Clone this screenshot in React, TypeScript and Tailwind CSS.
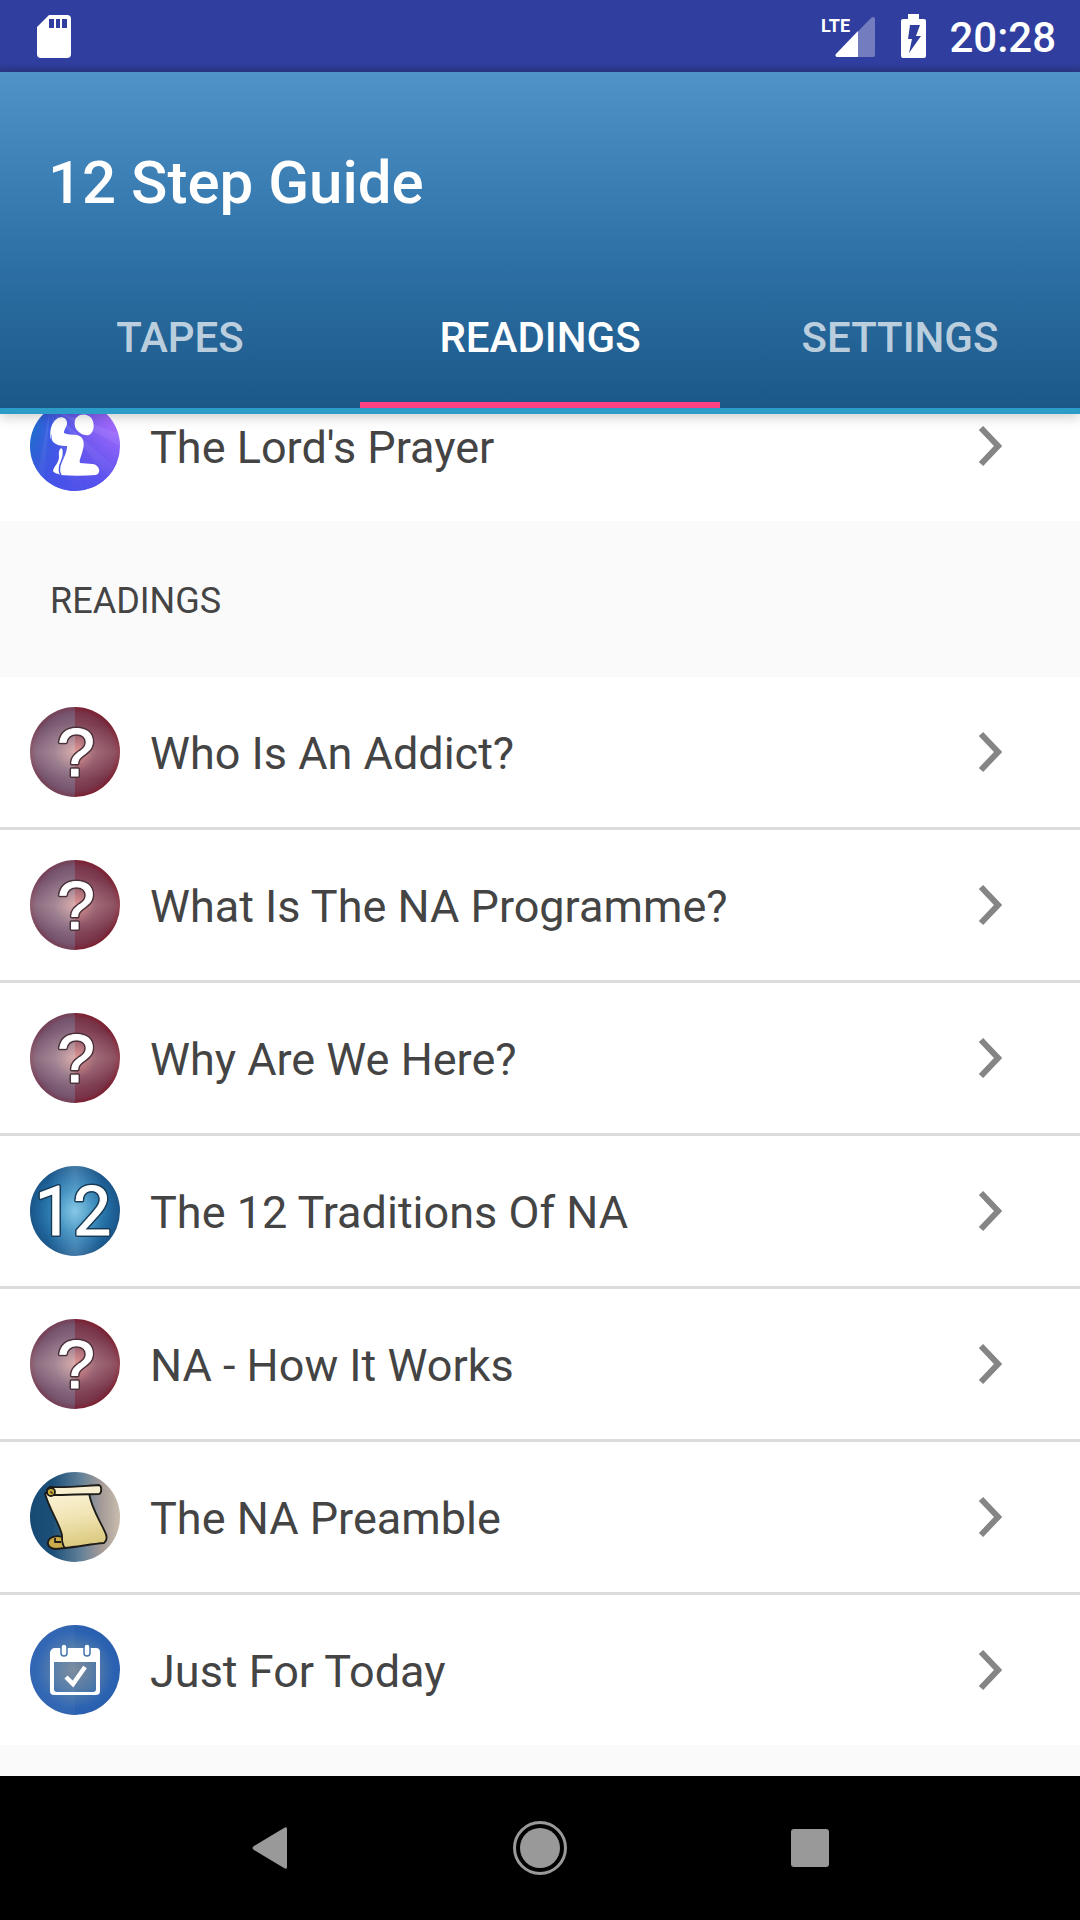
import { useState, type ReactNode } from 'react';
import { clsx } from 'clsx';

type IconName = 'prayer' | 'question' | 'twelve' | 'scroll' | 'calendar';

interface Reading {
  title: string;
  icon: IconName;
}

const TABS = ['TAPES', 'READINGS', 'SETTINGS'];

const PRAYERS: Reading[] = [{ title: "The Lord's Prayer", icon: 'prayer' }];

const READINGS: Reading[] = [
  { title: 'Who Is An Addict?', icon: 'question' },
  { title: 'What Is The NA Programme?', icon: 'question' },
  { title: 'Why Are We Here?', icon: 'question' },
  { title: 'The 12 Traditions Of NA', icon: 'twelve' },
  { title: 'NA - How It Works', icon: 'question' },
  { title: 'The NA Preamble', icon: 'scroll' },
  { title: 'Just For Today', icon: 'calendar' },
];

// Gradients shared by all row icons, rendered once
function IconDefs() {
  return (
    <svg className="absolute h-0 w-0" aria-hidden="true">
      <defs>
        <linearGradient id="prayer-bg" x1="0" y1="0.4" x2="1" y2="0.3">
          <stop offset="0" stopColor="#1a6fc8" />
          <stop offset="0.25" stopColor="#3d5ce6" />
          <stop offset="0.6" stopColor="#7a5cf2" />
          <stop offset="1" stopColor="#a86cff" />
        </linearGradient>
        <linearGradient id="prayer-shade" x1="0" y1="0" x2="0" y2="1">
          <stop offset="0.3" stopColor="#4a4ae8" stopOpacity="0" />
          <stop offset="1" stopColor="#4a50ea" stopOpacity="0.9" />
        </linearGradient>
        <radialGradient id="question-left" gradientUnits="userSpaceOnUse" cx="45" cy="45" r="46">
          <stop offset="0" stopColor="#d3a3a3" />
          <stop offset="0.45" stopColor="#8f7286" />
          <stop offset="0.85" stopColor="#76546e" />
          <stop offset="1" stopColor="#743a50" />
        </radialGradient>
        <radialGradient id="question-right" gradientUnits="userSpaceOnUse" cx="45" cy="45" r="46">
          <stop offset="0" stopColor="#dc8a88" />
          <stop offset="0.45" stopColor="#8b5063" />
          <stop offset="0.85" stopColor="#78354a" />
          <stop offset="1" stopColor="#7c1c2c" />
        </radialGradient>
        {/* Soft cross of light through the middle of the badge */}
        <linearGradient id="glint-y" x1="0" y1="0" x2="0" y2="1">
          <stop offset="0.2" stopColor="#ffe4dc" stopOpacity="0" />
          <stop offset="0.5" stopColor="#ffe4dc" stopOpacity="0.18" />
          <stop offset="0.8" stopColor="#ffe4dc" stopOpacity="0" />
        </linearGradient>
        <linearGradient id="glint-x">
          <stop offset="0.2" stopColor="#bfe8ff" stopOpacity="0" />
          <stop offset="0.5" stopColor="#bfe8ff" stopOpacity="0.24" />
          <stop offset="0.8" stopColor="#bfe8ff" stopOpacity="0" />
        </linearGradient>
        <radialGradient id="twelve-bg">
          <stop offset="0" stopColor="#72bcdd" />
          <stop offset="0.45" stopColor="#3587b9" />
          <stop offset="0.8" stopColor="#1f669d" />
          <stop offset="1" stopColor="#1b5588" />
        </radialGradient>
        <linearGradient id="scroll-bg">
          <stop offset="0" stopColor="#164a74" />
          <stop offset="0.25" stopColor="#1c4f78" />
          <stop offset="0.55" stopColor="#5f7f98" />
          <stop offset="0.8" stopColor="#a69c98" />
          <stop offset="1" stopColor="#c9bdae" />
        </linearGradient>
        <linearGradient id="scroll-paper" x1="0" y1="0" x2="0.2" y2="1">
          <stop offset="0" stopColor="#fbf3d8" />
          <stop offset="0.5" stopColor="#f1e4b4" />
          <stop offset="1" stopColor="#dccb82" />
        </linearGradient>
        <radialGradient id="calendar-bg">
          <stop offset="0" stopColor="#7c8a9c" />
          <stop offset="0.5" stopColor="#4f79a8" />
          <stop offset="0.85" stopColor="#2b62b2" />
          <stop offset="1" stopColor="#2a5fae" />
        </radialGradient>
      </defs>
    </svg>
  );
}

function PrayerIcon() {
  return (
    <>
      <circle cx="45" cy="45" r="45" fill="url(#prayer-bg)" />
      <g fill="#fff" opacity="0.08">
        <path d="M20 8 88 32 90 45Z" />
        <path d="M20 8 84 66 78 75Z" />
        <path d="M20 8 54 89 44 90Z" />
        <path d="M20 8 14 78 8 70Z" />
      </g>
      <circle cx="45" cy="45" r="45" fill="url(#prayer-shade)" />
      <g fill="#fff">
        <path d="M47 16c4-4 12-3 15 2 3 6 2 13-3 16-5 1-10-2-13-6-2-4-2-9 1-12Z" />
        <path d="M28 17c4-2 9 0 9 5 0 4-3 6-3 10 5 3 12 0 17 4 4 4 3 10 1 16-1 4-3 7-2 10l12 1c7 0 10 9 4 11-12 1-24 1-36 0-2-4 1-9 2-13 2-5 5-9 5-16-6 0-13-1-15-6-1-3 0-4-1-6v6c-2-8 0-18 7-22Z" />
        <path d="M31 47c4 2 3 7 2 12-2 6-4 10-1 15-4-1-8-2-9-4 1-5 5-7 6-13 0-4-1-7 2-10Z" />
      </g>
      <path d="M33 47c2 7-1 12-3 17-1 4-1 7 1 10" fill="none" stroke="#4a58e8" strokeWidth="1.5" />
    </>
  );
}

interface BadgeTextProps {
  x: number;
  outline: string;
  className: string;
  children: string;
}

// White characters with a thin dark rim
function BadgeText({ x, outline, className, children }: BadgeTextProps) {
  return (
    <g textAnchor="middle" strokeLinejoin="round" className={className}>
      <text x={x} y="69" fill={outline} stroke={outline} strokeWidth="4" aria-hidden="true">
        {children}
      </text>
      <text x={x} y="69" fill="#fff" stroke="#fff" strokeWidth="1">
        {children}
      </text>
    </g>
  );
}

function QuestionIcon() {
  return (
    <>
      <path d="M45 0a45 45 0 0 0 0 90Z" fill="url(#question-left)" />
      <path d="M45 0a45 45 0 0 1 0 90Z" fill="url(#question-right)" />
      <circle cx="45" cy="45" r="45" fill="url(#glint-y)" />
      <BadgeText x={46} outline="#4a3038" className="font-['Liberation_Sans',sans-serif] text-[68px]">
        ?
      </BadgeText>
    </>
  );
}

function TwelveIcon() {
  return (
    <>
      <circle cx="45" cy="45" r="45" fill="url(#twelve-bg)" />
      <circle cx="45" cy="45" r="45" fill="url(#glint-x)" />
      <BadgeText x={43} outline="#173a56" className="font-[Roboto,sans-serif] text-[68px]">
        12
      </BadgeText>
    </>
  );
}

function ScrollIcon() {
  return (
    <>
      <circle cx="45" cy="45" r="45" fill="url(#scroll-bg)" />
      <g stroke="#1d1c18" strokeWidth="1.8" strokeLinejoin="round">
        <path
          d="M15 21c3 14 14 29 17 42 0 5-1 10 2 13 13-1 27-4 40-5 4-3 3-7 1-11C69 47 61 35 59 21Z"
          fill="url(#scroll-paper)"
        />
        <path d="M32 65c-6-2-13 0-14 5-1 4 3 7 8 7l9-1c-3-3-3-7-3-11Z" fill="#c9ab4c" />
        <path d="M25 66v4h6" fill="none" />
        <path d="M20 15c16 1 33-1 49-2 3 1 3 8 0 9-16 0-31 1-47 1-5 1-7-6-2-8Z" fill="#f8efd0" />
        <circle cx="21" cy="20" r="4" fill="#cfae3f" />
        <path d="M20 20h2v2" fill="none" strokeWidth="1" />
      </g>
    </>
  );
}

function CalendarIcon() {
  return (
    <>
      <circle cx="45" cy="45" r="45" fill="url(#calendar-bg)" />
      <path d="M45 0a45 45 0 0 0 0 90Z" fill="#fff" opacity="0.04" />
      <path
        fillRule="evenodd"
        fill="#fff"
        d="M25 23h41a4 4 0 0 1 4 4v39a4 4 0 0 1-4 4H24a4 4 0 0 1-4-4V28a5 5 0 0 1 5-5Zm-1 14v27a3 3 0 0 0 3 3h36a3 3 0 0 0 3-3V37Z"
      />
      <g fill="#fff" stroke="#4273b0" strokeWidth="1.5">
        <rect x="31" y="19" width="6" height="12" rx="3" />
        <rect x="54" y="19" width="6" height="12" rx="3" />
      </g>
      <path d="m36 52 7 7 12-17" fill="none" stroke="#fff" strokeWidth="4.5" />
    </>
  );
}

const ICONS: Record<IconName, ReactNode> = {
  prayer: <PrayerIcon />,
  question: <QuestionIcon />,
  twelve: <TwelveIcon />,
  scroll: <ScrollIcon />,
  calendar: <CalendarIcon />,
};

function StatusBar() {
  return (
    <div className="flex h-[72px] shrink-0 items-center bg-linear-to-b from-[#303f9f] from-88% to-[#2b3786] pr-6 pl-9 text-white">
      <svg width="36" height="44" viewBox="0 0 36 44" aria-label="SD card">
        <path
          fillRule="evenodd"
          fill="#fff"
          d="M13 1h18a4 4 0 0 1 4 4v35a4 4 0 0 1-4 4H5a4 4 0 0 1-4-4V13Zm0 4v9h5V5Zm7 0v9h4V5Zm6 0v9h5V5Z"
        />
      </svg>
      <div className="ml-auto flex items-center">
        <svg className="overflow-visible" width="52" height="44" viewBox="0 0 52 44" aria-label="Mobile signal">
          <path d="M50 3a2 2 0 0 1 2 2v36a2 2 0 0 1-2 2H14a2 2 0 0 1-1-3L48 4Z" fill="#fff" opacity="0.32" />
          <path d="M35 17v26H14a2 2 0 0 1-1-3Z" fill="#fff" />
          <text x="-2" y="18" fontSize="18" fontWeight="700" fill="#fff">
            LTE
          </text>
        </svg>
        <svg className="ml-[26px]" width="25" height="44" viewBox="0 0 25 44" aria-label="Battery charging">
          <path
            fillRule="evenodd"
            fill="#fff"
            d="M7 0h11v5h5a2 2 0 0 1 2 2v35a2 2 0 0 1-2 2H2a2 2 0 0 1-2-2V7a2 2 0 0 1 2-2h5Zm2 11L7 25h4L8 39l12-17h-5l4-11Z"
          />
        </svg>
        <time className="ml-[23px] pt-1 text-[42px] leading-none font-medium">20:28</time>
      </div>
    </div>
  );
}

function ReadingRow({ reading }: { reading: Reading }) {
  return (
    <li>
      <button type="button" className="flex h-[150px] w-full items-center gap-[30px] bg-white pr-[78px] pl-[30px] text-left">
        <svg className="shrink-0" width="90" height="90" viewBox="0 0 90 90" aria-hidden="true">
          {ICONS[reading.icon]}
        </svg>
        <span className="flex-1 pt-1 text-[45px] leading-[54px] text-[#444]">{reading.title}</span>
        <svg width="24" height="42" viewBox="0 0 24 42" aria-hidden="true">
          <path d="m3 3 17 18L3 39" fill="none" stroke="#858585" strokeWidth="6" />
        </svg>
      </button>
    </li>
  );
}

function ReadingList({ items }: { items: Reading[] }) {
  return (
    <ul className="shrink-0 divide-y-3 divide-[#dcdcdc]">
      {items.map((item) => (
        <ReadingRow key={item.title} reading={item} />
      ))}
    </ul>
  );
}

function NavBar() {
  return (
    <nav className="flex h-36 shrink-0 items-center justify-center gap-[180px] bg-black text-[#999]">
      <button type="button" aria-label="Back" className="flex w-[90px] justify-center">
        <svg width="54" height="54" viewBox="0 0 54 54">
          <path d="M41 7q3-2 3 1v38q0 3-3 1L11 29q-3-2 0-4Z" fill="currentColor" />
        </svg>
      </button>
      <button type="button" aria-label="Home" className="flex w-[90px] justify-center">
        <svg width="54" height="54" viewBox="0 0 54 54">
          <circle cx="27" cy="27" r="25.5" fill="none" stroke="currentColor" strokeWidth="3" />
          <circle cx="27" cy="27" r="20" fill="currentColor" />
        </svg>
      </button>
      <button type="button" aria-label="Overview" className="flex w-[90px] justify-center">
        <svg width="54" height="54" viewBox="0 0 54 54">
          <rect x="8" y="8" width="38" height="38" rx="3" fill="currentColor" />
        </svg>
      </button>
    </nav>
  );
}

export default function App() {
  const [activeTab, setActiveTab] = useState('READINGS');

  return (
    <div className="flex h-screen flex-col bg-[#fafafa] font-[Roboto,sans-serif]">
      <IconDefs />
      <StatusBar />

      <header className="z-10 shrink-0 border-b-6 border-[#2c9cc8] bg-linear-to-b from-[#5093c8] via-[#3074aa] to-[#1b5888] text-white shadow-[0_3px_12px_rgba(0,0,0,0.2)]">
        <h1 className="flex h-[192px] items-center px-12 pt-[30px] text-[60px] leading-[72px] font-medium">12 Step Guide</h1>
        <div role="tablist" className="grid h-36 grid-cols-3">
          {TABS.map((tab) => (
            <button
              key={tab}
              type="button"
              role="tab"
              aria-selected={tab === activeTab}
              onClick={() => setActiveTab(tab)}
              className={clsx(
                'border-b-6 pt-2.5 text-[42px] leading-12 font-medium',
                tab === activeTab ? 'border-[#ff4081] text-white' : 'border-transparent text-white/70'
              )}
            >
              {tab}
            </button>
          ))}
        </div>
      </header>

      {/* Scrolled to the end, so the first row slides under the header */}
      <main className="flex flex-1 flex-col justify-end overflow-hidden pb-[31px]">
        <ReadingList items={PRAYERS} />
        <h2 className="flex h-[156px] shrink-0 items-center px-[50px] pt-1 text-[36px] leading-[42px] text-[#444]">
          READINGS
        </h2>
        <ReadingList items={READINGS} />
      </main>

      <NavBar />
    </div>
  );
}
